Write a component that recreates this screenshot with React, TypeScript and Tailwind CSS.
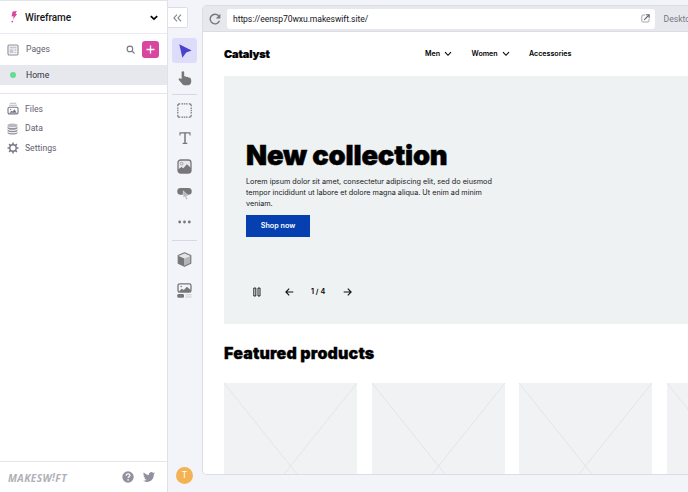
import type { ReactNode } from "react";

const heading = "font-['Inter',sans-serif] font-black text-black whitespace-nowrap";

function Chevron({ className = "" }: { className?: string }) {
  return (
    <svg width="8" height="6" viewBox="0 0 8 6" fill="none" stroke="currentColor" className={`shrink-0 ${className}`}>
      <path d="M1 1.2 4 4.3 7 1.2" strokeWidth="1.1" />
    </svg>
  );
}

function SideRow({ icon, label }: { icon: ReactNode; label: string }) {
  return (
    <div className="flex h-[19.5px] items-center">
      <span className="flex w-[25px] justify-center">{icon}</span>
      <span className="pt-px text-[8.6px] tracking-[0.02px] text-[#5f6070]">{label}</span>
    </div>
  );
}

function Sidebar() {
  return (
    <aside className="flex w-[168px] shrink-0 flex-col border-r border-[#dfe0e8] bg-white">
      <div className="flex h-[34px] items-center border-b border-t border-b-[#ebebef] border-t-[#e3e4eb]">
        <svg width="8" height="12" viewBox="0 0 8 12" className="ml-[10px]" fill="#d946a0">
          <path d="M2.6.6 6.8 0 5.5 3.1l1.6-.1L3 8.6l.6-3.4-2.1.2z" />
          <circle cx="2.3" cy="10.6" r=".9" />
        </svg>
        <span className="ml-[7px] text-[10px] font-medium tracking-[-0.05px] text-[#161620]">Wireframe</span>
        <svg width="8" height="6" viewBox="0 0 8 6" className="ml-auto mr-[9px] mt-px" fill="none" stroke="#000" strokeWidth="1.7">
          <path d="m.8 1.1 3.2 3 3.2-3" />
        </svg>
      </div>
      <div className="flex h-[31px] items-center">
        <svg width="12" height="12" viewBox="0 0 12 12" className="ml-[7px]">
          <rect x="1" y="1" width="10" height="10" rx="1.2" fill="#fff" stroke="#8c8c98" strokeWidth="1.1" />
          <path d="M2.5 2.5h7v2h-7z" fill="#c8c8d0" />
          <path d="M2.5 5.3h4v4h-4zM7.3 5.3h2.2v1.6H7.3zM7.3 7.7h2.2v1.6H7.3z" fill="#c8c8d0" />
        </svg>
        <span className="ml-[7px] text-[8.6px] tracking-[0.02px] text-[#5f6070]">Pages</span>
        <svg width="9" height="9" viewBox="0 0 9 9" className="ml-auto" fill="none" stroke="#777783" strokeWidth="1.1">
          <circle cx="3.9" cy="3.9" r="2.8" />
          <path d="m6 6 2.6 2.6" />
        </svg>
        <span className="ml-[7px] mr-[8px] flex size-[17px] items-center justify-center rounded-[3px] bg-[#d946a0]">
          <svg width="9" height="9" viewBox="0 0 9 9" stroke="#fff" strokeWidth="1.3">
            <path d="M4.5.5v8M.5 4.5h8" />
          </svg>
        </span>
      </div>
      <div className="flex h-[20px] items-center bg-[#e7e8ee]">
        <span className="ml-[10px] size-[6px] shrink-0 rounded-full bg-[#67dc91]" />
        <span className="ml-[10px] text-[8.6px] tracking-[0.02px] text-[#30303e]">Home</span>
      </div>
      <div className="mt-[8px] border-t border-[#e5e5eb] pt-[5px]">
        <SideRow
          label="Files"
          icon={
            <svg width="12" height="13" viewBox="0 0 12 13">
              <path d="M2.8 1.2h6.4M2 3.2h8" stroke="#b8b8c2" strokeWidth="1.1" />
              <rect x="1" y="5.3" width="10" height="6.6" rx="1.3" fill="#fff" stroke="#777784" strokeWidth="1.1" />
              <path d="m2.4 10.8 1.9-2 1.2.8 2-2.4 2.2 3.6z" fill="#777784" />
              <circle cx="3.7" cy="7.4" r=".6" fill="#777784" />
            </svg>
          }
        />
        <SideRow
          label="Data"
          icon={
            <svg width="11" height="12" viewBox="0 0 11 12" className="mt-px">
              <ellipse cx="5.5" cy="2.4" rx="5" ry="1.9" fill="#b9b9c3" />
              <path d="M.5 3.6c1 2 9 2 10 0v1.7c-1 2-9 2-10 0zM.5 6.2c1 2 9 2 10 0v1.5c-1 2-9 2-10 0zM.5 8.7c1 2 9 2 10 0v1.2c-1 2.2-9 2.2-10 0z" fill="#9292a0" />
            </svg>
          }
        />
        <SideRow
          label="Settings"
          icon={
            <svg width="12" height="12" viewBox="0 0 12 12" className="mt-px" fill="none" stroke="#777784">
              <circle cx="6" cy="6" r="3.2" strokeWidth="1.4" />
              <path d="M6 .5v2M6 9.5v2M.5 6h2M9.5 6h2M2.1 2.1l1.4 1.4M8.5 8.5l1.4 1.4M2.1 9.9l1.4-1.4M8.5 3.5l1.4-1.4" strokeWidth="1.5" />
            </svg>
          }
        />
      </div>
      <div className="mt-auto flex h-[31px] items-center border-t border-[#e6e6ec] text-[#9090a0]">
        <span className="ml-[8px] mt-[2px] whitespace-nowrap font-['Open_Sans',sans-serif] text-[10.2px] font-bold italic leading-none tracking-[0.4px] text-[#b0b0b9]">
          MAKESW<span className="relative -top-px">!</span>FT
        </span>
        <svg width="12" height="12" viewBox="0 0 12 12" className="ml-auto">
          <circle cx="6" cy="6" r="5.7" fill="currentColor" />
          <path d="M4.2 4.7c0-2.5 3.8-2.3 3.7-.2C7.9 5.8 6.1 5.7 6.1 7" stroke="#fff" strokeWidth="1.2" fill="none" />
          <circle cx="6.1" cy="8.9" r=".8" fill="#fff" />
        </svg>
        <svg width="12" height="12" viewBox="0 0 24 24" className="ml-[9px] mr-[12px]" fill="currentColor">
          <path d="M23.95 4.57a10 10 0 0 1-2.82.77 4.96 4.96 0 0 0 2.16-2.72 9.9 9.9 0 0 1-3.12 1.19 4.92 4.92 0 0 0-8.38 4.48A13.93 13.93 0 0 1 1.64 3.16a4.92 4.92 0 0 0 1.52 6.57 4.9 4.9 0 0 1-2.23-.61v.06a4.92 4.92 0 0 0 3.95 4.83 5 5 0 0 1-2.21.08 4.94 4.94 0 0 0 4.6 3.42A9.87 9.87 0 0 1 0 19.54a14 14 0 0 0 7.55 2.21c9.05 0 14-7.5 14-13.98l-.02-.63a9.94 9.94 0 0 0 2.42-2.57z" />
        </svg>
      </div>
    </aside>
  );
}

function Tool({ children, className = "h-[28px]" }: { children: ReactNode; className?: string }) {
  return <div className={`flex w-[25px] items-center justify-center ${className}`}>{children}</div>;
}

function Toolbar() {
  return (
    <div className="flex w-[34px] shrink-0 flex-col items-center pr-px pt-[7px] text-[#777779]">
      <div className="flex h-[21px] w-[20px] items-center justify-center self-start rounded-r-[2px] border border-l-0 border-[#dcdde6] bg-white">
        <svg width="9" height="8" viewBox="0 0 9 8" fill="none" stroke="#858590" strokeWidth="1.1">
          <path d="M4 .7.9 4 4 7.3M8 .7 4.9 4 8 7.3" />
        </svg>
      </div>
      <Tool className="mt-[10px] h-[25px] rounded-[3px] bg-[#dddcfb]">
        <svg width="13" height="14" viewBox="0 0 13 14" fill="#4a43c9" className="ml-px">
          <path d="M.3.3 12.7 6.5 7.2 8.4 3.4 13.7z" />
        </svg>
      </Tool>
      <Tool className="h-[31px]">
        <svg width="14" height="15" viewBox="0 0 14 15" fill="currentColor">
          <path d="M3.6 1.6a1.3 1.3 0 0 1 2.6 0v4c.5-.6 1.7-.5 2 .3.7-.5 1.8-.2 2 .7.8-.4 2-.1 2.5.8.6 1 .7 3.2.4 4.2-.4 1.8-1.5 2.7-3 2.7H6.8c-1 0-1.7-.5-2.3-1.1L.9 9.1C.2 8.3 1 7 2.1 7.4l1.5.7z" />
        </svg>
      </Tool>
      <div className="h-px w-[25px] bg-[#d8d9e0]" />
      <Tool className="h-[30px]">
        <svg width="15" height="15" viewBox="0 0 15 15" fill="none" stroke="currentColor" strokeWidth="1.2">
          <path d="M.8 3.2V2.6Q.8.8 2.6.8h.6M11.8.8h.6q1.8 0 1.8 1.8v.6M14.2 11.8v.6q0 1.8-1.8 1.8h-.6M3.2 14.2h-.6Q.8 14.2.8 12.4v-.6" />
          <path d="M4.5.8h6M14.2 4.5v6M10.5 14.2h-6M.8 10.5v-6" strokeDasharray="1.5 .75" />
        </svg>
      </Tool>
      <Tool className="h-[27px]">
        <svg width="12" height="12" viewBox="0 0 12 12" fill="none" stroke="currentColor" className="-mt-px">
          <path d="M1 3.6V.9h10v2.7M3.7 11.4h4.6" strokeWidth="1.1" />
          <path d="M6 .8v10.6" strokeWidth="1.5" />
        </svg>
      </Tool>
      <Tool>
        <svg width="15" height="15" viewBox="0 0 15 15">
          <rect x="1" y="1" width="13" height="13" rx="2.8" fill="#e6e6eb" stroke="currentColor" strokeWidth="1.3" />
          <path d="M1 10.5 4.4 8l2 1.3 3.5-4 4.1 3.6v2.8c0 1.4-.9 2.3-2.3 2.3H3.3C1.9 14 1 13.1 1 11.7z" fill="currentColor" />
          <circle cx="4.6" cy="4.6" r="1.4" fill="none" stroke="#a3a3a8" />
        </svg>
      </Tool>
      <Tool>
        <svg width="15" height="14" viewBox="0 0 15 14">
          <rect x=".3" y="1" width="14.4" height="6.8" rx="3.3" fill="currentColor" />
          <path d="m6.2 3.8 5.4 5.1-2.2.1 1.3 3.1-1.5.6-1.3-3.1-1.7 1.5z" fill="#b6b6bb" stroke="#f3f4fa" strokeWidth=".5" />
        </svg>
      </Tool>
      <Tool className="h-[27px]">
        <svg width="13" height="4" viewBox="0 0 13 4" fill="currentColor">
          <circle cx="1.7" cy="2" r="1.4" />
          <circle cx="6.5" cy="2" r="1.4" />
          <circle cx="11.3" cy="2" r="1.4" />
        </svg>
      </Tool>
      <div className="mt-[5px] h-px w-[25px] bg-[#d8d9e0]" />
      <Tool className="h-[36px]">
        <svg width="15" height="15" viewBox="0 0 15 15" strokeLinejoin="round">
          <path d="m1.2 3.8 6.3 2.8v7.7l-6.3-3.1z" fill="currentColor" />
          <path d="m7.5 6.6 6.3-2.8v7.4l-6.3 3.1z" fill="#b5b5b9" />
          <path d="m2.2 3.7 5.3-2.4 5.3 2.4-5.3 2.4z" fill="#e3e3e6" />
          <path d="m7.5.7 6.3 2.8v7.7l-6.3 3.1-6.3-3.1V3.5z" fill="none" stroke="currentColor" strokeWidth="1.1" />
        </svg>
      </Tool>
      <Tool className="h-[26px]">
        <svg width="15" height="15" viewBox="0 0 15 15">
          <rect x="1" y=".8" width="13" height="8.4" rx="1.8" fill="none" stroke="currentColor" strokeWidth="1.3" />
          <path d="m1.5 8.8 3.3-3 2 1.3 3.1-3.3L13.7 7v2.2z" fill="currentColor" />
          <circle cx="4.2" cy="3.5" r=".8" fill="currentColor" />
          <rect x=".3" y="11" width="6.7" height="3.7" rx="1.2" fill="currentColor" />
          <path d="M8.4 11.8h6.3M8.4 14h6.3" stroke="#cacad0" />
        </svg>
      </Tool>
      <div className="mb-[8px] mt-auto flex size-[17px] items-center justify-center rounded-full bg-[#f3b354] text-[9px] leading-none text-white">
        T
      </div>
    </div>
  );
}

function AddressBar() {
  return (
    <div className="flex h-[26px] shrink-0 items-center border-b border-[#dbdce4] bg-[#e7e8ee]">
      <svg width="12" height="12" viewBox="0 0 12 12" className="ml-[6px] shrink-0" fill="none" stroke="#777779" strokeWidth="1.4">
        <path d="M9.6 2.8A4.8 4.8 0 1 0 10.5 7.8" />
        <path d="M11.4.8v4.6H6.8z" fill="#777779" stroke="none" />
      </svg>
      <div className="ml-[6px] flex h-[20px] w-[428px] shrink-0 items-center rounded-[3px] bg-white pl-[6px] pr-[5px]">
        <span className="pt-px text-[8.6px] tracking-[-0.08px] text-[#16161e]">https://eensp70wxu.makeswift.site/</span>
        <svg width="9" height="9" viewBox="0 0 9 9" className="ml-auto" fill="none">
          <path d="M4 1H1.8Q.8 1 .8 2v5q0 1 1 1H7q1 0 1-1V5" stroke="#a5a5ab" />
          <path d="M4.8.8h3.4v3.4M8 1 3.2 5.8" stroke="#666670" strokeWidth="1.1" />
        </svg>
      </div>
      <span className="ml-[8.5px] whitespace-nowrap pt-px text-[8.6px] text-[#777783]">Desktop</span>
    </div>
  );
}

function Placeholder() {
  return (
    <div className="h-[166px] w-[133px] shrink-0 bg-[#f0f2f4]">
      <svg width="133" height="166" viewBox="0 0 133 166" stroke="#dfe2e5" strokeWidth=".8">
        <path d="m0 0 133 166M133 0 0 166" />
      </svg>
    </div>
  );
}

function Storefront() {
  return (
    <div className="flex flex-1 flex-col overflow-hidden bg-white pl-[21px] font-['Inter',sans-serif] text-black">
      <nav className="flex h-[44px] shrink-0 items-center pt-px text-[7.1px] font-semibold">
        <span className={`${heading} w-[201px] text-[11px] tracking-[-0.15px] [-webkit-text-stroke:0.2px_black]`}>Catalyst</span>
        <span className="flex w-[46.5px] items-center gap-[4px]">Men <Chevron /></span>
        <span className="flex w-[57.5px] items-center gap-[4px]">Women <Chevron /></span>
        <span>Accessories</span>
      </nav>
      <section className="flex h-[248px] shrink-0 flex-col bg-[#eef2f3] pl-[22px]">
        <h1 className={`${heading} mt-[63px] text-[27.4px] leading-[32px] tracking-[-0.17px] [-webkit-text-stroke:0.5px_black]`}>New collection</h1>
        <p className="mt-[6px] w-[252px] whitespace-nowrap text-[7.26px] leading-[10.8px] text-[#202022]">
          Lorem ipsum dolor sit amet, consectetur adipiscing elit, sed do eiusmod
          <br />
          tempor incididunt ut labore et dolore magna aliqua. Ut enim ad minim
          <br />
          veniam.
        </p>
        <button className="mt-[6px] h-[22px] w-[64px] shrink-0 bg-[#053fb0] pt-px text-[7.2px] font-semibold text-white">Shop now</button>
        <div className="mt-[49px] flex h-[12px] items-center pl-[7px]">
          <svg width="8" height="10" viewBox="0 0 8 10" fill="none" stroke="#111" strokeWidth=".9">
            <path d="M.8 1h2v8h-2zM5 1h2v8H5z" />
          </svg>
          <svg width="9" height="8" viewBox="0 0 9 8" className="ml-[24px]" fill="none" stroke="#111" strokeWidth="1.1">
            <path d="M8.3 4H1M4.2.7.9 4l3.3 3.3" />
          </svg>
          <span className="ml-[17px] w-[15px] whitespace-nowrap text-[7.2px] font-semibold">1 / 4</span>
          <svg width="9" height="8" viewBox="0 0 9 8" className="ml-[17px]" fill="none" stroke="#111" strokeWidth="1.1">
            <path d="M.7 4H8M4.8.7 8.1 4 4.8 7.3" />
          </svg>
        </div>
      </section>
      <h2 className={`${heading} mt-[19px] text-[16px] leading-[20px] tracking-[0.16px] [-webkit-text-stroke:0.3px_black]`}>Featured products</h2>
      <div className="mt-[20px] flex gap-[14.7px]">
        <Placeholder />
        <Placeholder />
        <Placeholder />
        <Placeholder />
      </div>
    </div>
  );
}

export default function App() {
  return (
    <div className="flex h-[492px] w-[688px] overflow-hidden bg-[#f3f4fa] font-['Roboto',sans-serif]">
      <Sidebar />
      <Toolbar />
      <main className="mb-[17px] mt-[5px] flex min-w-0 flex-1 flex-col overflow-hidden rounded-l-[5px] border border-r-0 border-[#dbdce4]">
        <AddressBar />
        <Storefront />
      </main>
    </div>
  );
}
